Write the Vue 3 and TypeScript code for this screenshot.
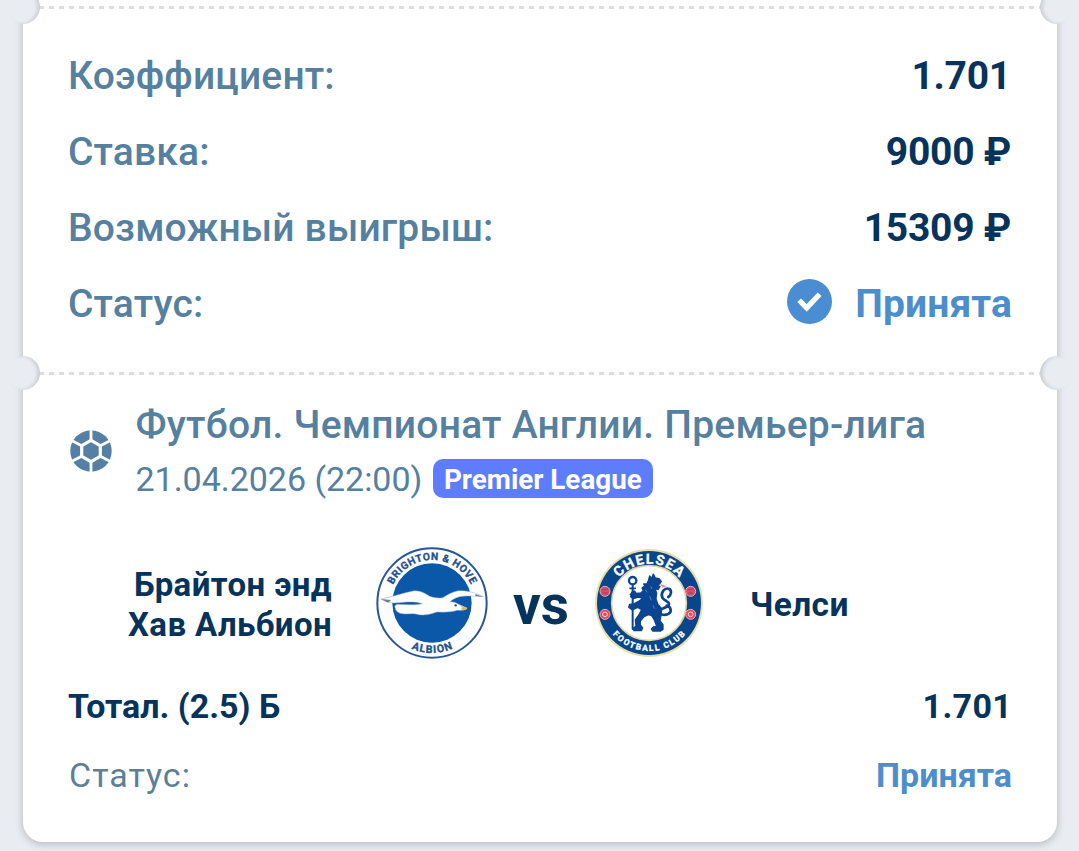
<script setup lang="ts">
interface SummaryRow {
  label: string;
  value: string;
  accepted?: boolean;
}

const summary: SummaryRow[] = [
  { label: 'Коэффициент:', value: '1.701' },
  { label: 'Ставка:', value: '9000 ₽' },
  { label: 'Возможный выигрыш:', value: '15309 ₽' },
  { label: 'Статус:', value: 'Принята', accepted: true },
];

const event = {
  title: 'Футбол. Чемпионат Англии. Премьер-лига',
  date: '21.04.2026 (22:00)',
  league: 'Premier League',
  home: ['Брайтон энд', 'Хав Альбион'],
  away: 'Челси',
  market: 'Тотал. (2.5) Б',
  odds: '1.701',
  status: 'Принята',
};
</script>

<template>
  <div class="page">
    <main class="ticket">
      <div class="divider">
        <i class="notch notch-left"></i>
        <i class="notch notch-right"></i>
      </div>

      <section class="summary">
        <div v-for="row in summary" :key="row.label" class="row">
          <span class="label">{{ row.label }}</span>
          <span class="value" :class="{ accepted: row.accepted }">
            <svg v-if="row.accepted" class="check" viewBox="0 0 45 45">
              <circle cx="22.5" cy="22.5" r="22.5" fill="#4a8dd3" />
              <path d="M12.2 21.2 19.7 28.9 32.6 15.2" fill="none" stroke="#fff" stroke-width="5.2" />
            </svg>{{ row.value }}
          </span>
        </div>
      </section>

      <div class="divider">
        <i class="notch notch-left"></i>
        <i class="notch notch-right"></i>
      </div>

      <section class="event">
        <header class="event-head">
          <svg class="ball" viewBox="-21 -21 42 42">
            <circle r="20.7" fill="#5580a3" />
            <g fill="none" stroke="#fff" stroke-width="3.2">
              <path d="M0-10.7 9.3-5.35V5.35L0 10.7-9.3 5.35V-5.35Z" />
              <path d="M0-10.7V-22M0 10.7V22M9.3-5.35 20-10.7M9.3 5.35 20 10.7M-9.3-5.35-20-10.7M-9.3 5.35-20 10.7" stroke-width="2.8" />
            </g>
          </svg>
          <div>
            <div class="title">{{ event.title }}</div>
            <div class="meta">
              <span class="date">{{ event.date }}</span>
              <span class="badge">{{ event.league }}</span>
            </div>
          </div>
        </header>

        <div class="teams">
          <div class="home">
            <div v-for="line in event.home" :key="line">{{ line }}</div>
          </div>

          <svg class="crest-home" viewBox="43 29 348 348">
            <defs>
              <path id="home-top" d="M88 203A129 129 0 0 1 346 203" />
              <path id="home-bottom" d="M67 203A150 150 0 0 0 367 203" />
            </defs>
            <circle cx="217" cy="203" r="164" fill="#fff" stroke="#2a5597" stroke-width="6" />
            <circle cx="217" cy="203" r="119" fill="#0b57a8" />
            <g class="crest-text" fill="#24508f" stroke="#24508f">
              <text font-size="31" text-anchor="middle" textLength="292">
                <textPath href="#home-top" startOffset="50%">BRIGHTON &amp; HOVE</textPath>
              </text>
              <text font-size="32" text-anchor="middle" textLength="128">
                <textPath href="#home-bottom" startOffset="50%">ALBION</textPath>
              </text>
            </g>
            <path
              d="M64 191C96 185 130 173 160 167 179 164 196 174 210 183 224 188 238 189 249 187 262 180 276 170 292 167 320 163 349 173 371 184 350 184 321 179 300 184 287 187 277 193 272 199 280 199 289 201 295 206L322 218C319 225 307 226 293 225 275 231 251 231 232 230 211 237 195 241 177 238 157 231 140 239 121 234 112 230 107 225 107 219 104 214 105 209 113 207 138 207 163 211 188 205 162 196 133 201 104 203 88 203 73 198 64 191Z"
              fill="#fff" stroke="#8eabc8" stroke-width="1.5"
            />
            <path d="M64 191 94 194C91 199 87 202 82 201ZM347 176 371 184 347 182Z" fill="#777f98" />
            <path d="M299 210 323 218C322 224 313 226 302 222L309 217Z" fill="#e7b45b" />
            <circle cx="288" cy="210" r="3.5" fill="#334b66" />
          </svg>

          <div class="versus">vs</div>

          <svg class="crest-away" viewBox="44 37 330 330">
            <defs>
              <path id="away-top" d="M91 202A118 118 0 0 1 327 202" />
              <path id="away-bottom" d="M65 202A144 144 0 0 0 353 202" />
            </defs>
            <circle cx="209" cy="202" r="162" fill="#e7dfa5" />
            <circle cx="209" cy="202" r="156" fill="#08468c" />
            <circle cx="209" cy="202" r="112" fill="#fff" stroke="#dfd8a4" stroke-width="5" />
            <g class="crest-text" fill="#fff" stroke="#fff">
              <text font-size="42" text-anchor="middle" textLength="206">
                <textPath href="#away-top" startOffset="50%">CHELSEA</textPath>
              </text>
              <text font-size="25" text-anchor="middle" textLength="248">
                <textPath href="#away-bottom" startOffset="50%">FOOTBALL CLUB</textPath>
              </text>
            </g>
            <g fill="#e14b61" stroke="#f5a7ac" stroke-width="3">
              <circle cx="77" cy="167" r="15" />
              <circle cx="334" cy="167" r="15" />
              <circle cx="77" cy="236" r="15" />
              <circle cx="334" cy="236" r="15" />
            </g>
            <g fill="none" stroke="#fbd9d8" stroke-width="3">
              <circle cx="77" cy="236" r="7" />
              <circle cx="334" cy="236" r="7" />
            </g>
            <path d="M68 163 86 159M70 172H85M325 163 343 160M327 172H341" stroke="#4f4b82" stroke-width="2" />
            <g fill="none" stroke="#0b4591" stroke-linecap="round">
              <circle cx="160" cy="135" r="11" stroke-width="7" />
              <path d="M160 148V280" stroke-width="6" />
              <path d="M152 158H168M153 176H166" stroke-width="5" />
              <path d="M235 226C243 242 266 240 274 228M236 224C248 218 262 217 268 208 274 198 254 196 249 186 243 170 256 154 270 160 277 164 277 178 267 184M262 210C270 212 275 218 274 228" stroke-width="8" />
            </g>
            <path
              d="M207 135 211 121 217 128 222 115 228 127 239 129 246 137 241 145 231 147 242 153 236 162 227 159 232 172 230 190 235 205 247 220 245 239 242 256 251 267 251 281 244 286 220 286 216 280 222 274 232 272 225 253 217 240 207 237 193 244 183 256 183 268 190 277 186 285 164 285 161 278 170 272 168 253 179 237 187 222 175 215 159 223 148 215 151 206 165 204 183 194 189 187 177 184 162 189 154 183 157 170 166 166 170 173 184 172 192 165 188 157 196 151 193 145 203 144Z"
              fill="#0b4591" stroke="#0b4591" stroke-width="4" stroke-linejoin="round"
            />
            <path d="M198 162 203 170M214 152 218 160M211 182 216 194M221 209 226 219" fill="none" stroke="#7f9fcb" stroke-width="2" />
            <path d="M244 147 258 153 249 153" fill="none" stroke="#ed8090" stroke-width="4" />
          </svg>

          <div class="away">{{ event.away }}</div>
        </div>

        <div class="market">
          <span>{{ event.market }}</span>
          <span class="market-odds">{{ event.odds }}</span>
        </div>
        <div class="result">
          <span class="result-label">Статус:</span>
          <span class="result-value">{{ event.status }}</span>
        </div>
      </section>
    </main>
  </div>
</template>

<style>
body {
  margin: 0;
  background: #e9edf2;
}
</style>

<style scoped>
.page {
  box-sizing: border-box;
  height: 851px;
  padding: 0 22px 9px 23px;
  overflow: hidden;
  background: #e9edf2;
  font-family: Roboto, "Liberation Sans", sans-serif;
  color: #06335b;
}
.ticket {
  box-sizing: border-box;
  height: 862px;
  margin-top: -20px;
  padding-top: 26px;
  border-radius: 20px;
  background: #fff;
  box-shadow: 0 2px 9px rgba(0, 0, 0, 0.23);
}
.divider {
  position: relative;
  height: 3px;
  margin: 0 17px 0 16px;
  background: repeating-linear-gradient(to right, #dcdddf 0 5px, transparent 5px 10px);
}
.notch {
  position: absolute;
  top: -16px;
  width: 34px;
  height: 34px;
  border-radius: 50%;
  background: #e9edf2;
}
.notch-left {
  left: -33px;
  box-shadow: inset -3px 0 4px -1px rgba(0, 0, 0, 0.16);
}
.notch-right {
  right: -34px;
  box-shadow: inset 3px 0 4px -1px rgba(0, 0, 0, 0.16);
}
.summary {
  height: 363px;
  box-sizing: border-box;
  padding: 29px 45px 0;
}
.row {
  display: flex;
  justify-content: space-between;
  height: 76px;
  line-height: 76px;
  font-size: 39px;
  white-space: nowrap;
}
.label {
  font-weight: 500;
  letter-spacing: 0.15px;
  color: #5580a0;
}
.value {
  display: flex;
  align-items: center;
  padding-right: 1px;
  font-weight: 700;
  letter-spacing: -0.25px;
}
.accepted {
  padding-right: 0;
  color: #4d8dcc;
  letter-spacing: 0.1px;
}
.check {
  width: 45px;
  height: 45px;
  margin: -5px 23px 0 0;
}
.event {
  padding: 0 45px;
}
.event-head {
  display: flex;
  padding-top: 26px;
  color: #5580a0;
  white-space: nowrap;
}
.ball {
  width: 42px;
  height: 42px;
  margin: 29px 24px 0 1.5px;
}
.title {
  height: 48px;
  line-height: 48px;
  font-size: 39px;
  font-weight: 500;
  letter-spacing: 0.23px;
}
.meta {
  display: flex;
  align-items: center;
  height: 60px;
}
.date {
  font-size: 34px;
  letter-spacing: -0.03px;
}
.badge {
  box-sizing: border-box;
  width: 220px;
  height: 39px;
  margin: -2px 0 0 10.5px;
  border-radius: 10px;
  background: #5e7dfd;
  color: #fff;
  font-size: 27.8px;
  font-weight: 700;
  line-height: 41px;
  text-align: center;
}
.teams {
  display: flex;
  align-items: center;
  height: 116px;
  margin-top: 36px;
  font-size: 33px;
  font-weight: 700;
  white-space: nowrap;
}
.home {
  width: 264px;
  margin-top: 4px;
  line-height: 40px;
  letter-spacing: 0.4px;
  text-align: right;
}
.crest-home {
  width: 116px;
  height: 116px;
  margin-left: 42px;
}
.versus {
  width: 60px;
  margin: 4px 23px 0 21px;
  font-size: 55px;
  line-height: 60px;
  text-align: center;
}
.crest-away {
  width: 110px;
  height: 110px;
  margin-top: -1px;
}
.crest-text {
  font-family: Roboto, sans-serif;
  font-weight: 700;
}
.away {
  margin: 3px 0 0 46px;
  font-size: 33.5px;
  letter-spacing: 0.4px;
}
.market,
.result {
  display: flex;
  justify-content: space-between;
  height: 69px;
  line-height: 69px;
  font-size: 34px;
}
.market {
  margin-top: 11px;
  font-weight: 700;
}
.market-odds {
  letter-spacing: 0.3px;
}
.result-label {
  padding-left: 1px;
  color: #5d7f95;
  letter-spacing: 1px;
}
.result-value {
  color: #4d8dcc;
  font-weight: 700;
}
</style>
